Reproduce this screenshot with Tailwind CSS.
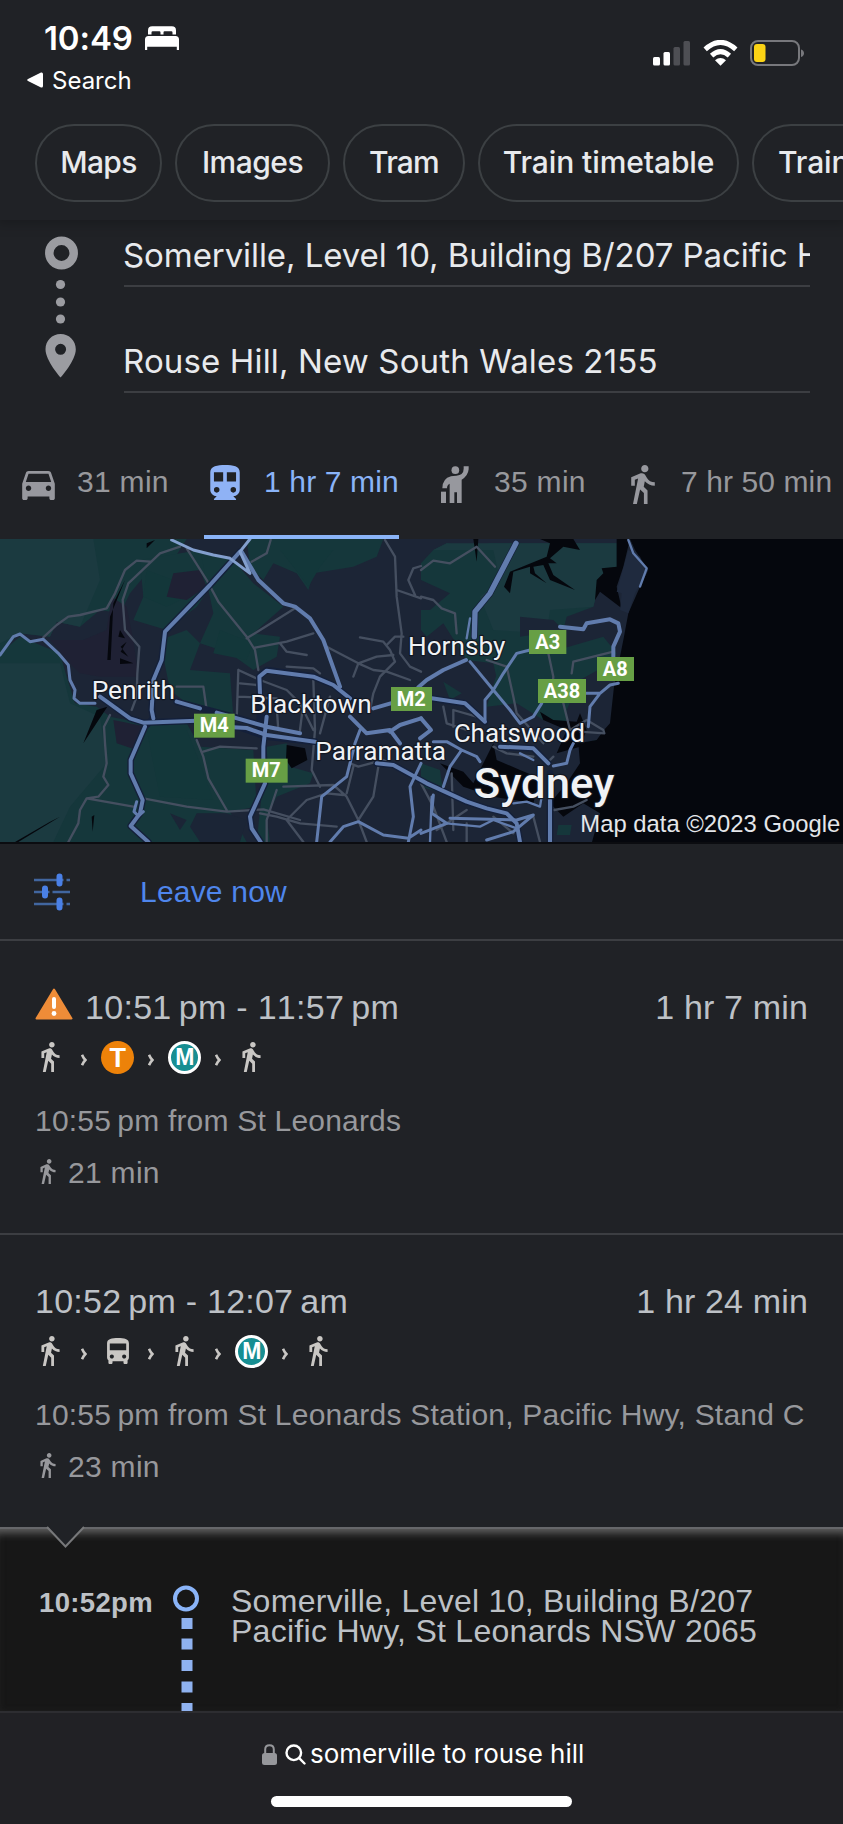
<!DOCTYPE html>
<html lang="en">
<head>
<meta charset="utf-8">
<title>somerville to rouse hill</title>
<script src="https://cdn.jsdelivr.net/npm/@tailwindcss/browser@4"></script>
</head>
<body class="bg-[#202226]">
<svg class="hidden">
  <symbol id="walk" viewBox="6 1.5 13 21.5"><path fill="currentColor" d="M13.5 5.5c1.1 0 2-.9 2-2s-.9-2-2-2-2 .9-2 2 .9 2 2 2zM9.8 8.9L7 23h2.1l1.8-8 2.1 2v6h2v-7.500l-2.100-2 .6-3C14.800 12 16.800 13 19 13v-2c-1.900 0-3.500-1-4.300-2.400l-1-1.600c-.4-.6-1-1-1.700-1-.3 0-.5.1-.8.1L6 8.300V13h2V9.600l1.800-.7z"/></symbol>
  <symbol id="chev" viewBox="0 0 6 12"><path fill="none" stroke="currentColor" stroke-width="2.600" d="M1 .8C2 3.200 3.200 4.800 4.400 6 3.200 7.200 2 8.800 1 11.200"/></symbol>
  <symbol id="bus" viewBox="4 2 16 19"><path fill="currentColor" d="M4 16c0 .88.39 1.670 1 2.220V20c0 .55.45 1 1 1h1c.55 0 1-.45 1-1v-1h8v1c0 .55.45 1 1 1h1c.55 0 1-.45 1-1v-1.780c.61-.55 1-1.340 1-2.220V6c0-3.500-3.580-4-8-4s-8 .5-8 4v10zm3.500 1c-.83 0-1.500-.67-1.500-1.500S6.670 14 7.500 14s1.500.67 1.500 1.500S8.330 17 7.500 17zm9 0c-.83 0-1.500-.67-1.500-1.500s.67-1.500 1.500-1.500 1.500.67 1.500 1.500-.67 1.500-1.500 1.500zm1.500-6H6V6h12v5z"/></symbol>
</svg>

<main class="w-[843px] h-[1824px] overflow-hidden flex flex-col font-['Liberation_Sans',Arial,sans-serif] text-[#bdc1c6] whitespace-nowrap">

  <!-- Status bar and search chips -->
  <header class="h-[220px] shrink-0 font-[Inter,sans-serif] text-white relative z-10 shadow-[0_0_12px_4px_rgba(0,0,0,0.22)] bg-[#202226]">
    <div class="h-[124px] flex justify-between">
      <div class="pt-[18px]">
        <div class="h-10 pl-[44px] flex items-center text-[33px] leading-10 font-semibold">
          <span class="w-[101px] tracking-[-0.100px]">10:49</span>
          <svg class="w-[34px] h-[24px]" viewBox="0 0 34 24" fill="#fff"><path d="M3 8.500V4.500Q3 .3 7.200.3H26.800Q31 .3 31 4.500V8.500H27.500V6.500Q27.500 5.300 26.300 5.300H19.600Q18.500 5.300 18.500 6.500V8.500H15.500V6.500Q15.500 5.300 14.400 5.300H7.700Q6.500 5.300 6.500 6.500V8.500Z"/><path d="M0 24V13.500Q0 10 3.500 10H30.500Q34 10 34 13.500V24H31.800V20.800H2.200V24Z"/></svg>
        </div>
        <div class="mt-1.5 h-8 pl-[27px] flex items-center text-[24px] leading-8">
          <svg class="w-4 h-4" viewBox="0 0 16 16"><path fill="#fff" d="M1 7 14 .6Q15.800 0 16 2V14Q15.800 16 14 15.400L1 9Q-.6 8 1 7Z"/></svg>
          <span class="pl-[9px] pt-px">Search</span>
        </div>
      </div>
      <div class="flex gap-3 pt-10 pr-[39px]">
        <svg class="w-[38px] h-[26px]" viewBox="0 0 38 26"><rect x="0" y="17" width="7" height="8.500" rx="1.500" fill="#fff"/><rect x="10.500" y="12" width="6.500" height="13.500" rx="1.500" fill="#fff"/><rect x="20.500" y="7" width="6.500" height="18.500" rx="1.500" fill="#4e4f54"/><rect x="30.500" y="1" width="6.500" height="24.500" rx="1.500" fill="#4e4f54"/></svg>
        <svg class="w-[35px] h-[26px]" viewBox="0 0 35 26" fill="none" stroke="#fff" stroke-width="5"><path d="M2.200 9.300Q17.500 -4.500 32.800 9.300"/><path d="M8.600 15.600Q17.500 7.600 26.400 15.600"/><path stroke="none" fill="#fff" d="M12 20.200Q17.500 15.800 23 20.200L17.500 25.800Z"/></svg>
        <svg class="w-[54px] h-[26px]" viewBox="0 0 54 26"><rect x="1" y="1" width="48" height="24" rx="7" fill="none" stroke="#77787c" stroke-width="2"/><rect x="4" y="4" width="11.500" height="18" rx="3" fill="#fbd315"/><path d="M51 9.500Q54 10.500 54 13.200T51 17Z" fill="#77787c"/></svg>
      </div>
    </div>
    <nav class="flex gap-[13px] pl-[35px] overflow-hidden text-[30px] leading-[73px] font-medium text-[#e8eaed] text-center">
      <span class="shrink-0 h-[78px] w-[127px] rounded-full border-2 border-[#3c4043] tracking-[-0.700px]">Maps</span>
      <span class="shrink-0 h-[78px] w-[155px] rounded-full border-2 border-[#3c4043] tracking-[-0.500px]">Images</span>
      <span class="shrink-0 h-[78px] w-[122px] rounded-full border-2 border-[#3c4043] tracking-[-0.800px]">Tram</span>
      <span class="shrink-0 h-[78px] w-[261px] rounded-full border-2 border-[#3c4043] tracking-[-0.100px]">Train timetable</span>
      <span class="shrink-0 h-[78px] w-[180px] rounded-full border-2 border-[#3c4043] text-left pl-6 tracking-[-0.100px]">Train times</span>
    </nav>
  </header>

  <!-- Origin and destination -->
  <section class="h-[205px] shrink-0 flex font-[Inter,sans-serif] text-[33px] leading-10 text-[#e8eaed]">
    <svg class="w-[124px] h-[205px] shrink-0" viewBox="0 220 124 205" fill="#9aa0a6">
      <circle cx="61.500" cy="253" r="12.200" fill="none" stroke="#9b9ca1" stroke-width="8.500"/>
      <g fill="#9b9ca1"><circle cx="60.500" cy="284.500" r="4.600"/><circle cx="60.500" cy="302" r="4.600"/><circle cx="60.500" cy="319" r="4.600"/>
      <path fill-rule="evenodd" d="M60.600 334C52 334 45.500 340.800 45.500 349.200C45.500 360.500 60.600 377.500 60.600 377.500S75.800 360.500 75.800 349.200C75.800 340.800 69.200 334 60.600 334ZM60.600 343.800A5.500 5.500 0 1 1 60.600 354.800A5.500 5.500 0 1 1 60.600 343.800Z"/></g>
    </svg>
    <div class="w-[686px] pt-[15px]">
      <div class="h-[52px] border-b-2 border-[#3c3e42] overflow-hidden tracking-[-0.080px]"><span class="-ml-px">Somerville, Level 10, Building B/207 Pacific Hwy</span></div>
      <div class="mt-[54px] h-[52px] border-b-2 border-[#3c3e42] overflow-hidden tracking-[0.140px]"><span class="-ml-px">Rouse Hill, New South Wales 2155</span></div>
    </div>
  </section>

  <!-- Travel modes -->
  <nav class="h-[114px] shrink-0 grid grid-cols-[204px_195px_211px_233px] text-[30px] text-[#97989c]">
    <div class="flex items-center pl-[22px]">
      <svg class="w-[33px] h-[29px] mt-1.5" viewBox="3 5 18 16"><path fill="#97989e" d="M18.920 6.010C18.720 5.420 18.160 5 17.500 5h-11c-.66 0-1.210.42-1.420 1.010L3 12v8c0 .55.45 1 1 1h1c.55 0 1-.45 1-1v-1h12v1c0 .55.45 1 1 1h1c.55 0 1-.45 1-1v-8l-2.080-5.990zM6.500 16c-.83 0-1.500-.67-1.500-1.500S5.670 13 6.500 13s1.500.67 1.500 1.500S7.330 16 6.500 16zm11 0c-.83 0-1.500-.67-1.500-1.500s.67-1.500 1.500-1.500 1.500.67 1.500 1.500-.67 1.500-1.500 1.500zM5 11l1.500-4.500h11L19 11H5z"/></svg>
      <span class="pl-[22px] pb-0.5 tracking-[0.300px]">31 min</span>
    </div>
    <div class="flex items-center pl-[6px] border-b-4 pt-1 border-[#8ab4f8] text-[#8ab4f8]">
      <svg class="w-[30px] h-[35px]" viewBox="4 2 16 19"><path fill="#8fb2f5" fill-rule="evenodd" d="M12 2c-4 0-8 .5-8 4v9.500C4 17.430 5.570 19 7.500 19L6 20.500v.5h12v-.5L16.500 19c1.930 0 3.500-1.570 3.500-3.500V6c0-3.500-3.580-4-8-4zM7.500 17a1.500 1.500 0 1 1 0-3 1.500 1.500 0 0 1 0 3zM11 11H6V6h5zM13 11V6h5v5zM16.500 17a1.500 1.500 0 1 1 0-3 1.500 1.500 0 0 1 0 3z"/></svg>
      <span class="pl-[24px] pb-0.5 tracking-[0.150px]">1 hr 7 min</span>
    </div>
    <div class="flex items-center pl-[42px]">
      <svg class="w-[28px] h-[37px] mt-1" viewBox="62 74 84 111" fill="#97989e"><circle cx="105" cy="86.500" r="11.500"/><path d="M130 75H145V84Q143 104 124 115V185H110V153H102V185H88V127Q80 130 80 141H66Q66 112 92 105Q97 103 108 103Q130 101 130 82Z"/><rect x="62" y="151" width="15" height="34"/></svg>
      <span class="pl-[25px] pb-0.5 tracking-[0.300px]">35 min</span>
    </div>
    <div class="flex items-center pl-[21px]">
      <svg class="w-[24px] h-[39px] mt-1 text-[#97989e]"><use href="#walk"/></svg>
      <span class="pl-[26px] pb-0.5 tracking-[0.100px]">7 hr 50 min</span>
    </div>
  </nav>

  <!-- Map preview; three units per pixel -->
  <section class="h-[305px] shrink-0 border-b-2 border-[#0b0c10]">
    <svg class="block w-[843px] h-[303px]" viewBox="0 27 2529 909" preserveAspectRatio="none" fill="none" stroke-linejoin="round" stroke-linecap="round">
      <rect y="27" width="2529" height="909" fill="#1c2536"/>
      <!-- parkland -->
      <g fill="#15373b">
        <path d="M0 27H560L520 90 590 120 570 180 480 170 440 130 390 190 360 250 300 240 240 290 170 275 150 320 60 310 0 370Z"/>
        <path d="M0 370 60 320 180 370 200 440 225 520 290 530 330 560 430 580 560 580 600 650 760 660 770 830 690 845 740 936H0Z"/>
        <path d="M420 90 600 60 640 160 590 230 500 300 400 270 430 200Z"/>
        <path d="M480 330 560 300 600 340 570 420 690 430 700 560 560 520 510 480Z"/>
        <path d="M600 60 700 90 760 160 850 230 760 310 840 320 830 380 760 420 690 370 600 340 640 250Z"/>
        <path d="M740 27H1150L1130 80 1060 110 940 130 925 180 890 130 820 100 790 150 750 110Z"/>
        <path d="M800 650 860 640 870 710 940 730 930 760 830 800 800 860 810 936H770Z"/>
        <path d="M1263 100 1300 60 1340 40 1420 50 1470 40H1850V110L1800 150 1780 230 1700 260 1690 300 1640 310 1600 480 1500 490 1480 400 1400 390 1330 280 1280 320 1263 300Z"/>
        <path d="M1640 370 1810 320 1850 370 1830 400 1740 450 1700 540 1700 590 1630 570 1550 520 1460 530 1500 400Z"/>
        <path d="M1815 625 1865 630 1850 688 1812 670ZM1740 640 1790 630 1770 670ZM1330 455 1385 490 1350 510ZM1675 885 1715 885 1710 915 1670 915Z"/>
        <path d="M1263 700 1320 720 1330 790 1263 770Z"/>
      </g>
      <g fill="#1b3a40"><path d="M0 27H280L300 150 240 290 170 275 150 320 60 310 0 340ZM0 400 180 400 210 520 300 560 320 700 210 830 160 936H0ZM1300 60 1340 40H1850V110L1800 150 1780 230 1650 240 1640 310 1480 300 1440 200 1500 150 1480 60Z"/></g>
      <g fill="#13373a"><path d="M440 120 520 150 560 200 500 230 430 200ZM660 300 760 340 740 390 640 370ZM440 600 560 600 600 700 640 810 480 800ZM840 60 1000 60 960 110 925 170 880 110Z"/></g>
      <g fill="#1f2134"><path d="M335 200 380 230 400 330 415 440 300 440 240 430 200 390 150 330 250 330 320 300ZM340 570 440 590 410 660 350 640ZM520 130 600 120 620 170 560 210 500 200Z"/></g>
      <g fill="#1b2536"><path d="M1263 150 1350 190 1290 240 1263 240ZM1560 260 1660 270 1690 300 1560 320ZM590 850 680 850 740 870 720 936H600L570 890ZM510 850 560 870 540 900Z"/></g>
      <!-- water -->
      <g fill="#05070d">
        <path d="M1850 27H2529V936H1776L1800 850 1750 820 1690 860 1650 820 1700 760 1740 700 1735 640 1790 630 1812 600 1830 580 1842 470 1870 330 1885 250 1920 170 1945 120 1905 60 1890 27 1870 110 1850 170 1865 235 1800 185 1785 210 1790 150 1810 130 1805 115 1850 110Z"/>
        <path d="M1620 27H1720L1740 60 1690 50 1650 85 1670 100 1645 100 1660 135 1725 180 1650 150 1630 105 1600 110 1605 130 1640 160 1590 130 1590 110 1540 125 1530 190 1512 170 1530 125 1640 80 1650 40Z"/>
        <path d="M1420 27 1435 27 1430 95Z"/>
        <path d="M1700 600 1630 570 1620 545 1660 570 1730 575 1740 550 1760 600 1740 650 1670 670Z"/>
        <path d="M1320 700 1390 725 1420 760 1480 640 1490 690 1560 720 1620 745 1600 820 1480 800 1390 770 1350 730Z"/>
        <path d="M375 150 340 220 332 390 322 390 330 260ZM322 530 250 640 290 540ZM440 40 465 30 440 55ZM180 860 55 936H45L150 875ZM275 860 283 855 278 905Z"/>
        <path d="M360 300 375 325 355 320ZM380 335 362 365 385 380 362 350ZM360 385 400 400 360 402ZM860 645 915 655 922 690 875 715 858 690Z"/>
      </g>
      <path fill="#1f2a3e" d="M1885 60 1920 80 1940 130 1905 190 1885 250 1860 240 1865 190 1850 185Z"/>
      <!-- minor roads -->
      <g stroke="#454f60" stroke-width="7">
        <path d="M130 322 170 285 205 260 240 255 320 235 345 190 375 120 410 92 450 95M540 50 480 70 385 160 368 210 375 300 418 350 412 430 410 500 395 540"/>
        <path d="M560 55 620 150 655 215 740 320 765 360 775 420M740 325 885 235M765 353 860 335 940 310M840 340 860 365 920 375M1080 322 1150 335 1170 360 1185 395 1140 440 1120 490 1110 540"/>
        <path d="M330 555 312 590 315 640 320 700 310 740 325 765 295 800 260 805 240 840 235 880 205 936M260 805 400 830M430 805 560 830 680 845 790 838 900 870M590 630 610 680 625 745 680 840M610 665 660 650 770 655M530 470 610 470 620 540"/>
        <path d="M715 420 710 570M715 420 780 450 860 480 900 520 940 600M720 460 770 465M715 500 830 505M940 450 945 600 935 720 960 770M980 350 1075 400 1130 380 1180 375M860 410 940 415 960 430M830 530 835 600M910 520 900 600M990 500 960 610M1060 440 1075 400 1120 420 1160 425 1230 450"/>
        <path d="M1155 30 1185 80 1190 200 1205 310 1200 370 1230 410 1263 425M1190 180 1263 205M1225 150 1240 115 1263 108M1225 150 1245 195M755 95 800 70 812 30M1160 345 1185 320 1210 320"/>
        <path d="M850 770 1000 765 1040 800 1075 870M860 870 920 810 980 790 1030 795M800 936 800 870 830 780M860 870 910 936M780 850 830 860 900 880 1010 890M1135 710 1120 800 1075 870 1100 936M1050 700 1075 710 1150 690 1170 700M1040 790 1060 710"/>
        <path d="M1263 120 1300 92 1350 100 1430 50 1485 110M1263 200 1300 210 1325 235 1365 250 1370 310M1460 390 1520 410 1540 500 1550 550 1630 640M1645 370 1660 440 1655 490M1715 430 1720 395 1840 365M1330 530 1340 580 1400 600M1360 590 1360 540 1430 560M1690 520 1710 600 1760 570 1810 600 1813 610 1740 605"/>
        <path d="M1355 730 1360 900M1263 760 1300 830 1340 936M1400 880 1400 936M1310 900 1400 840M1480 860 1540 910M1600 860 1620 936M1663 840 1720 830 1760 810M1480 650 1520 670 1600 680M1640 700 1660 680"/>
      </g>
      <!-- motorway casing, then surface -->
      <g stroke="#14203a" stroke-width="20"><path d="M720 65 630 165 495 305 485 390 460 450 455 540 460 565 435 590 392 690 392 730 428 810 420 850 392 888 445 936M300 500 390 565 430 578 590 572 720 592 800 620 945 635M530 515 700 560 800 590M780 600 778 440 800 420 940 440 1000 465 1050 505M797 560 790 650 795 760 750 860 755 895 782 936M1130 700 1180 705 1280 760 1400 815 1460 835 1520 850 1550 880 1560 936M1295 505 1395 520 1455 575M1548 40 1470 190 1425 245 1423 320M1500 650 1600 655 1645 700M1650 730 1650 936"/></g>
      <g stroke="#617cad" stroke-width="12">
        <path d="M720 65 630 165 495 305 485 390 460 450 455 540 460 565M435 590 392 690 392 730 428 810 420 850 392 888 445 936"/>
        <path d="M300 500 390 565 430 578 590 572M700 592 740 594 800 615 945 635M530 515 600 535M650 548 800 590 900 610"/>
        <path d="M780 490 778 440 800 422 940 440 1000 465 1050 505M800 560 790 650V690M795 760 750 860 755 895 782 936"/>
        <path d="M725 65 775 150 850 220 885 230 930 265 970 330 1020 470M1050 560 1100 610 1170 600 1200 640M1120 535 1190 515M1170 605 1200 585 1263 565"/>
        <path d="M1130 700 1180 705 1280 760 1400 815 1460 835 1520 850 1550 880 1560 936"/>
        <path d="M1295 505 1395 520 1455 575M1263 565 1293 600 1260 625"/>
        <path stroke-width="16" d="M1548 40 1470 190 1425 245 1423 320"/>
        <path d="M1398 390 1330 420 1280 450 1255 472M1500 650 1600 655 1645 700M1650 810V936"/>
        <path d="M1680 290 1750 298 1760 280 1830 268 1855 280 1860 305 1840 350V380"/>
      </g>
      <g stroke="#617cad" stroke-width="9">
        <path d="M0 375 40 320 60 312 90 335 130 328 175 370 205 405 210 450 225 480 222 505 240 520 285 520M410 815 402 845 415 858 430 845"/>
        <path stroke="#839fce" d="M515 30 580 60 640 75 690 85 750 130 720 65 750 27"/>
        <path d="M1080 600 1065 640 1040 740 965 800 950 936M990 936 1030 890 1075 875 1150 915 1225 925 1263 900M1263 700 1230 770 1240 860 1225 936"/>
        <path d="M1410 395 1480 480 1530 540 1560 580 1600 560 1625 520M1480 480 1510 430 1550 370 1590 360M1480 480 1455 510 1455 570M1765 590 1770 530 1800 490 1830 465 1855 460M1800 490 1750 490"/>
        <path d="M1660 708 1700 700 1710 660 1720 640M1300 635 1340 635 1385 660 1430 680 1440 695M1385 660 1350 710 1330 770M1300 795 1295 850 1340 880 1263 910M1350 865 1550 870 1600 855 1540 905 1460 930"/>
        <path stroke-width="7" d="M1340 880 1440 890 1480 870 1550 895M1540 820 1580 815 1620 830 1625 800M1400 325 1410 265M1885 30 1900 70 1940 115 1920 170M1560 670 1600 690M1295 800 1290 936"/>
      </g>
      <!-- route shields -->
      <g fill="#679f45"><rect x="582" y="551" width="122" height="72"/><rect x="737" y="686" width="126" height="72"/><rect x="1173" y="471" width="123" height="72"/><rect x="1587" y="300" width="112" height="72"/><rect x="1791" y="381" width="111" height="72"/><rect x="1614" y="447" width="144" height="72"/></g>
      <g fill="#fff" font-family="Roboto, sans-serif" font-weight="700" font-size="60" text-anchor="middle">
        <text x="643" y="607">M4</text><text x="799" y="742">M7</text><text x="1234" y="527">M2</text><text x="1643" y="358">A3</text><text x="1846" y="438">A8</text><text x="1686" y="505">A38</text>
      </g>
      <!-- places -->
      <g fill="#f0f2f5" font-family="Roboto, sans-serif" font-size="77" stroke="#121722" stroke-width="7" paint-order="stroke">
        <text x="275" y="507" textLength="250" lengthAdjust="spacingAndGlyphs">Penrith</text>
        <text x="751" y="550" textLength="364" lengthAdjust="spacingAndGlyphs">Blacktown</text>
        <text x="946" y="690" textLength="392" lengthAdjust="spacingAndGlyphs">Parramatta</text>
        <text x="1224" y="375" textLength="292" lengthAdjust="spacingAndGlyphs">Hornsby</text>
        <text x="1361" y="635" textLength="394" lengthAdjust="spacingAndGlyphs">Chatswood</text>
        <text x="1421" y="804" textLength="422" lengthAdjust="spacingAndGlyphs" font-size="128" font-weight="500">Sydney</text>
      </g>
      <text x="1741" y="907" textLength="780" lengthAdjust="spacingAndGlyphs" fill="#e4e6ea" font-family="Liberation Sans, Arial, sans-serif" font-size="71">Map data ©2023 Google</text>
    </svg>
  </section>

  <!-- Departure options -->
  <section class="h-[97px] shrink-0 border-b-2 border-[#3c3e42] flex items-center pl-[34px] text-[30px] text-[#4f86ec]">
    <svg class="w-[36px] h-[38px]" viewBox="0 0 36 38" fill="none" stroke="#4a80e6"><path stroke="#41669f" stroke-width="2.500" d="M0 7H36M0 19H36M0 31H36"/><path stroke="#202226" stroke-width="3" d="M31 5v4M17 17v4M31 29v4"/><path stroke-width="6" stroke-linecap="round" d="M25.500 3.500V10.500M11 15.500V22.500M25.500 27.500V34.500"/></svg>
    <span class="pl-[70px] tracking-[0.200px]">Leave now</span>
  </section>

  <!-- Route one -->
  <section class="h-[294px] shrink-0 border-b-2 border-[#3c3e42] pt-[46px] pl-[35px] pr-[35px]">
    <div class="h-10 flex items-center text-[34px] leading-10">
      <svg class="w-[38px] h-[32px] -mt-1.5" viewBox="0 0 38 32"><path fill="#ee8c38" stroke="#ee8c38" stroke-width="2" stroke-linejoin="round" d="M19 1.500 36.500 30.500H1.500Z"/><path stroke="#fff" stroke-width="4" stroke-linecap="round" d="M19 11V19"/><circle cx="19" cy="25.500" r="2.400" fill="#fff"/></svg>
      <span class="pl-[12px] grow tracking-[0.300px] [font-kerning:none]">10:51&#8201;pm - 11:57&#8201;pm</span>
      <span class="tracking-[0.150px]">1 hr 7 min</span>
    </div>
    <div class="mt-[13px] -ml-px h-[34px] flex items-center text-[#c9c7c4]">
      <span class="w-[33.500px] grid place-items-center"><svg class="w-[19px] h-[30px]"><use href="#walk"/></svg></span>
      <span class="w-[33.500px] grid place-items-center pt-1.5"><svg class="w-[6px] h-[12px]"><use href="#chev"/></svg></span>
      <span class="w-[33.500px] grid place-items-center"><b class="size-[33px] rounded-full bg-[#ed8209] text-white text-[27px] leading-[34px] text-center">T</b></span>
      <span class="w-[33.500px] grid place-items-center pt-1.5"><svg class="w-[6px] h-[12px]"><use href="#chev"/></svg></span>
      <span class="w-[33.500px] grid place-items-center"><b class="size-[33px] rounded-full bg-[#178e92] border-[3px] border-white text-white text-[23px] leading-[27px] flex justify-center">M</b></span>
      <span class="w-[33.500px] grid place-items-center pt-1.5"><svg class="w-[6px] h-[12px]"><use href="#chev"/></svg></span>
      <span class="w-[33.500px] grid place-items-center"><svg class="w-[19px] h-[30px]"><use href="#walk"/></svg></span>
    </div>
    <div class="mt-[29px] text-[30px] leading-9 text-[#97989c] tracking-[0.200px]">10:55&#8201;pm from St Leonards</div>
    <div class="mt-4 h-9 flex items-center pl-[5px] text-[30px] leading-9 text-[#97989c]"><svg class="w-[16px] h-[25px] mb-1"><use href="#walk"/></svg><span class="pl-[12px] tracking-[0.300px]">21 min</span></div>
  </section>

  <!-- Route two -->
  <section class="h-[292px] shrink-0 pt-[46px] pl-[35px] pr-[35px]">
    <div class="h-10 flex items-center justify-between text-[34px] leading-10">
      <span class="tracking-[0.240px] [font-kerning:none]">10:52&#8201;pm - 12:07&#8201;am</span>
      <span class="tracking-[0.150px]">1 hr 24 min</span>
    </div>
    <div class="mt-[13px] -ml-px h-[34px] flex items-center text-[#c9c7c4]">
      <span class="w-[33.500px] grid place-items-center"><svg class="w-[19px] h-[30px]"><use href="#walk"/></svg></span>
      <span class="w-[33.500px] grid place-items-center pt-1.5"><svg class="w-[6px] h-[12px]"><use href="#chev"/></svg></span>
      <span class="w-[33.500px] grid place-items-center"><svg class="w-[22px] h-[26px]"><use href="#bus"/></svg></span>
      <span class="w-[33.500px] grid place-items-center pt-1.5"><svg class="w-[6px] h-[12px]"><use href="#chev"/></svg></span>
      <span class="w-[33.500px] grid place-items-center"><svg class="w-[19px] h-[30px]"><use href="#walk"/></svg></span>
      <span class="w-[33.500px] grid place-items-center pt-1.5"><svg class="w-[6px] h-[12px]"><use href="#chev"/></svg></span>
      <span class="w-[33.500px] grid place-items-center"><b class="size-[33px] rounded-full bg-[#178e92] border-[3px] border-white text-white text-[23px] leading-[27px] flex justify-center">M</b></span>
      <span class="w-[33.500px] grid place-items-center pt-1.5"><svg class="w-[6px] h-[12px]"><use href="#chev"/></svg></span>
      <span class="w-[33.500px] grid place-items-center"><svg class="w-[19px] h-[30px]"><use href="#walk"/></svg></span>
    </div>
    <div class="mt-[29px] text-[30px] leading-9 text-[#97989c] tracking-[0.220px]">10:55&#8201;pm from St Leonards Station, Pacific Hwy, Stand C</div>
    <div class="mt-4 h-9 flex items-center pl-[5px] text-[30px] leading-9 text-[#97989c]"><svg class="w-[16px] h-[25px] mb-1"><use href="#walk"/></svg><span class="pl-[12px] tracking-[0.300px]">23 min</span></div>
  </section>

  <!-- Expanded itinerary -->
  <section class="relative h-[184px] shrink-0 bg-[#171717] border-t-2 border-[#66676a] shadow-[inset_0_12px_9px_-8px_#626262,inset_0_0_6px_rgba(50,50,50,0.3)] flex">
    <svg class="absolute left-[46px] -top-[5px] w-[40px] h-[25px]" viewBox="0 0 40 25"><path fill="#202226" d="M1 0H39V2L20 22 1 2Z"/><path fill="none" stroke="#77787a" stroke-width="2" d="M1 3 19.500 22.500 38 3"/></svg>
    <b class="w-[173px] pl-[39px] pt-[58px] text-[27.500px] leading-8 tracking-[0.350px]">10:52pm</b>
    <svg class="w-[58px] h-[182px]" viewBox="173 1529 58 182"><circle cx="186" cy="1598.500" r="11" fill="none" stroke="#8ab4f8" stroke-width="4"/><path fill="#8fb2f0" d="M181.500 1618h11v11h-11zM181.500 1638.500h11v11h-11zM181.500 1660h11v11h-11zM181.500 1681.500h11v11h-11zM181.500 1703h11v8h-11z"/></svg>
    <p class="pt-[57px] text-[32px] leading-[30px] tracking-[0.280px]">Somerville, Level 10, Building B/207<br>Pacific Hwy, St Leonards NSW 2065</p>
  </section>

  <!-- Browser address bar -->
  <footer class="h-[113px] shrink-0 bg-[#212125] border-t-2 border-[#2d2d31] flex flex-col items-center font-[Inter,sans-serif] text-white">
    <div class="mt-[23px] h-9 w-[319px] flex items-center text-[26px] leading-9">
      <svg class="w-[15px] h-[21px] shrink-0" viewBox="0 0 15 21"><rect y="9" width="15" height="12" rx="2.500" fill="#96979b"/><path fill="none" stroke="#96979b" stroke-width="2" d="M3.200 10V5.500Q3.200 1.200 7.500 1.200T11.800 5.500V10"/></svg>
      <svg class="ml-2 w-[21px] h-[21px] shrink-0" viewBox="0 0 21 21" fill="none" stroke="#fff" stroke-width="2.400" stroke-linecap="round"><circle cx="8.800" cy="8.800" r="7.300"/><path d="M14.200 14.200 19.500 19.500"/></svg>
      <span class="pl-[4px] tracking-[-0.050px]">somerville to rouse hill</span>
    </div>
    <div class="mt-[24px] w-[301px] h-[11px] rounded-full bg-white"></div>
  </footer>
</main>
</body>
</html>
